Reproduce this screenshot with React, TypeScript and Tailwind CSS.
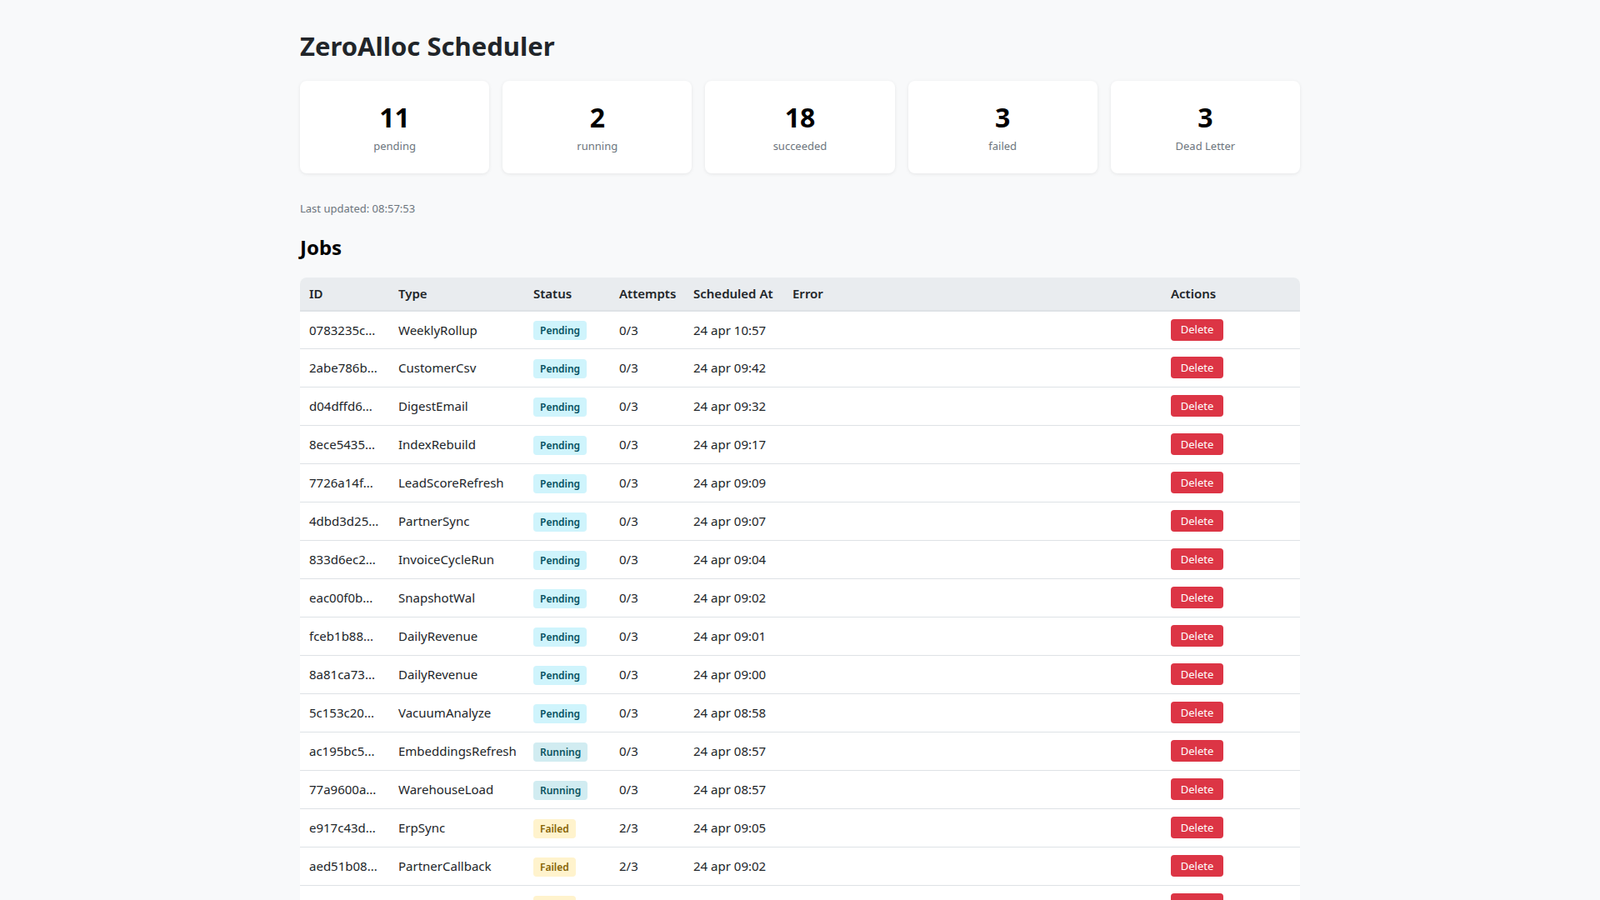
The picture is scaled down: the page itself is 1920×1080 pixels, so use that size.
const jobs: [string, string, string, string, string][] = [
  ["0783235c...", "WeeklyRollup", "Pending", "0/3", "24 apr 10:57"],
  ["2abe786b...", "CustomerCsv", "Pending", "0/3", "24 apr 09:42"],
  ["d04dffd6...", "DigestEmail", "Pending", "0/3", "24 apr 09:32"],
  ["8ece5435...", "IndexRebuild", "Pending", "0/3", "24 apr 09:17"],
  ["7726a14f...", "LeadScoreRefresh", "Pending", "0/3", "24 apr 09:09"],
  ["4dbd3d25...", "PartnerSync", "Pending", "0/3", "24 apr 09:07"],
  ["833d6ec2...", "InvoiceCycleRun", "Pending", "0/3", "24 apr 09:04"],
  ["eac00f0b...", "SnapshotWal", "Pending", "0/3", "24 apr 09:02"],
  ["fceb1b88...", "DailyRevenue", "Pending", "0/3", "24 apr 09:01"],
  ["8a81ca73...", "DailyRevenue", "Pending", "0/3", "24 apr 09:00"],
  ["5c153c20...", "VacuumAnalyze", "Pending", "0/3", "24 apr 08:58"],
  ["ac195bc5...", "EmbeddingsRefresh", "Running", "0/3", "24 apr 08:57"],
  ["77a9600a...", "WarehouseLoad", "Running", "0/3", "24 apr 08:57"],
  ["e917c43d...", "ErpSync", "Failed", "2/3", "24 apr 09:05"],
  ["aed51b08...", "PartnerCallback", "Failed", "2/3", "24 apr 09:02"],
  ["b31f09ae...", "ReportExport", "Failed", "2/3", "24 apr 08:59"],
];

const badge: Record<string, string> = {
  Pending: "bg-[#cff4fc] text-[#055160]",
  Running: "bg-[#d1ecf1] text-[#0c5460]",
  Failed: "bg-[#fff3cd] text-[#856404]",
};

const stats = [
  ["11", "pending"],
  ["2", "running"],
  ["18", "succeeded"],
  ["3", "failed"],
  ["3", "Dead Letter"],
];

const heads: [string, string][] = [
  ["ID", "w-[107px]"],
  ["Type", "w-[162px]"],
  ["Status", "w-[103px]"],
  ["Attempts", "w-[89px]"],
  ["Scheduled At", "w-[119px]"],
  ["Error", "w-[454px]"],
  ["Actions", "w-[166px]"],
];

export default function App() {
  return (
    <div className="min-h-screen bg-[#f8f9fa] font-['Noto_Sans',sans-serif] text-[#212529]">
      <div className="w-[1200px] ml-[360px] pt-[33px]">
        <h1 className="text-[31px] font-bold leading-[44px] text-[#212529]">ZeroAlloc Scheduler</h1>
        <div className="grid grid-cols-5 gap-[16px] mt-[20px]">
          {stats.map(([n, l]) => (
            <div key={l} className="h-[111px] bg-white rounded-[8px] shadow-[0_1px_4px_rgba(0,0,0,0.08)] flex flex-col items-center justify-center pt-[2px]">
              <div className="text-[32px] font-bold leading-[40px] text-black">{n}</div>
              <div className="text-[13px] text-[#6c757d] mt-[5px]">{l}</div>
            </div>
          ))}
        </div>
        <div className="text-[13px] text-[#6c757d] mt-[33px]">Last updated: 08:57:53</div>
        <h2 className="text-[24px] font-bold leading-[32px] mt-[20px] text-black">Jobs</h2>
        <table className="mt-[20px] w-[1200px] table-fixed border-collapse text-[15px] bg-white rounded-t-[8px] overflow-hidden">
          <thead>
            <tr className="bg-[#e9ecef] h-[40px] border-b-2 border-[#dee2e6] text-left">
              {heads.map(([h, w]) => (
                <th key={h} className={`${w} px-[11px] font-semibold whitespace-nowrap`}>{h}</th>
              ))}
            </tr>
          </thead>
          <tbody>
            {jobs.map((j) => (
              <tr key={j[0]} className="h-[46px] border-b border-[#dee2e6]">
                <td className="px-[11px] whitespace-nowrap">{j[0]}</td>
                <td className="px-[11px] whitespace-nowrap">{j[1]}</td>
                <td className="px-[11px]">
                  <span className={`inline-block mt-[2px] px-[8px] rounded-[4px] text-[12px] leading-[23px] font-semibold ${badge[j[2]]}`}>{j[2]}</span>
                </td>
                <td className="px-[11px]">{j[3]}</td>
                <td className="px-[11px] whitespace-nowrap">{j[4]}</td>
                <td className="px-[11px]"></td>
                <td className="px-[11px]">
                  <button className="bg-[#dc3545] text-white rounded-[4px] h-[26px] w-[63px] text-[13px] font-['Liberation_Sans',sans-serif] -mt-[2px]">Delete</button>
                </td>
              </tr>
            ))}
          </tbody>
        </table>
      </div>
    </div>
  );
}
